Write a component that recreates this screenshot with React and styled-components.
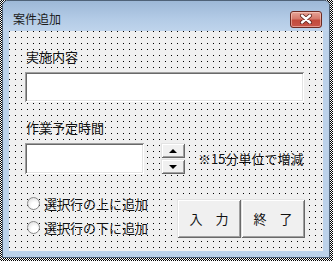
import React from "react";
import styled, { createGlobalStyle } from "styled-components";

const GlobalStyle = createGlobalStyle`
  html, body {
    margin: 0;
    padding: 0;
    width: 333px;
    height: 261px;
    overflow: hidden;
  }
  body {
    font-family: "Noto Sans CJK JP", "Noto Sans", sans-serif;
    color: #111;
  }
`;

const Stage = styled.div`
  width: 333px;
  height: 261px;
  box-sizing: border-box;
  padding: 0 3px 3px 2px;
  background-color: #fff;
  background-image: conic-gradient(#000 25%, #fff 0 50%, #000 0 75%, #fff 0);
  background-size: 2px 2px;
`;

const Window = styled.div`
  width: 328px;
  height: 258px;
  box-sizing: border-box;
  border: 1px solid #4f6278;
  border-radius: 6px 6px 0 0;
  background: #bcd2ea;
  display: flex;
  flex-direction: column;
  overflow: hidden;
`;

const TitleBar = styled.div`
  height: 30px;
  flex: none;
  box-sizing: border-box;
  padding: 6px 7px 0 10px;
  display: flex;
  align-items: center;
  justify-content: space-between;
  background: linear-gradient(#9db8d7, #b3cbe6 60%, #bfd4ec);
`;

const Title = styled.span`
  font-size: 12px;
  line-height: 24px;
  color: #1a1a1a;
`;

const CloseButton = styled.div`
  width: 32px;
  height: 17px;
  box-sizing: border-box;
  border: 1px solid #6c2a22;
  border-radius: 3px;
  background: linear-gradient(#e6a497, #d67a6c 45%, #c24a3b 55%, #c8564a);
  box-shadow: inset 0 0 0 1px rgba(255, 220, 210, 0.5);
  display: flex;
  align-items: center;
  justify-content: center;
`;

const Frame = styled.div`
  flex: 1;
  padding: 0 6px 6px 6px;
  display: flex;
`;

const Client = styled.div`
  flex: 1;
  box-sizing: border-box;
  padding: 18px 18px 0 16px;
  background-color: #f0f0f0;
  background-image: conic-gradient(at 1px 1px, #f0f0f0 270deg, #000 270deg);
  background-size: 6px 6px;
  display: flex;
  flex-direction: column;
  font-size: 13px;
`;

const Label = styled.div`
  height: 16px;
  line-height: 16px;
  margin-left: 1px;
  margin-top: ${(p) => p.$top || 0}px;
  align-self: flex-start;
  white-space: nowrap;
`;

const TextBox = styled.div`
  width: ${(p) => p.$w}px;
  height: ${(p) => p.$h}px;
  margin-top: ${(p) => p.$top || 0}px;
  box-sizing: border-box;
  background: #fff;
  box-shadow: inset 1px 1px #a0a0a0, inset -1px -1px #fff,
    inset 2px 2px #696969, inset -2px -2px #e3e3e3;
  flex: none;
`;

const Row = styled.div`
  display: flex;
  align-items: center;
  margin-top: ${(p) => p.$top || 0}px;
`;

const Spin = styled.div`
  margin-left: 17px;
  width: 24px;
  display: flex;
  flex-direction: column;
  gap: 1px;
`;

const SpinButton = styled.div`
  height: 15px;
  box-sizing: border-box;
  background: #f0f0f0;
  box-shadow: inset 1px 1px #e3e3e3, inset -1px -1px #696969,
    inset 2px 2px #fff, inset -2px -2px #a0a0a0;
  display: flex;
  align-items: center;
  justify-content: center;
`;

const Arrow = styled.span`
  width: 0;
  height: 0;
  border-left: 4px solid transparent;
  border-right: 4px solid transparent;
  ${(p) =>
    p.$down ? "border-top: 4px solid #000;" : "border-bottom: 4px solid #000;"}
`;

const Note = styled.span`
  margin-left: 13px;
  white-space: nowrap;
`;

const BottomRow = styled.div`
  display: flex;
  justify-content: space-between;
  align-items: flex-start;
  margin-top: 21px;
`;

const Options = styled.div`
  display: flex;
  flex-direction: column;
  gap: 8px;
  margin-left: 2px;
`;

const Option = styled.label`
  display: flex;
  align-items: center;
  height: 16px;
  gap: 4px;
  white-space: nowrap;
`;

const RadioCircle = styled.span`
  width: 13px;
  height: 13px;
  box-sizing: border-box;
  border-radius: 50%;
  border: 1px solid #8a8a8a;
  background: radial-gradient(circle at 60% 65%, #fff 30%, #e4e4e4 75%, #cfcfcf);
  flex: none;
`;

const Buttons = styled.div`
  display: flex;
  margin-top: 4px;
`;

const CmdButton = styled.div`
  width: 64px;
  height: 39px;
  box-sizing: border-box;
  background: #f0f0f0;
  box-shadow: inset 1px 1px #e3e3e3, inset -1px -1px #696969,
    inset 2px 2px #fff, inset -2px -2px #a0a0a0;
  display: flex;
  align-items: center;
  justify-content: center;
  font-size: 13px;
  white-space: pre;
`;

const CloseIcon = () => (
  <svg width="14" height="10" viewBox="0 0 14 10">
    <path
      d="M3 1.5 L11 8.5 M11 1.5 L3 8.5"
      stroke="#5a1c15"
      strokeWidth="4"
      strokeLinecap="round"
    />
    <path
      d="M3 1.5 L11 8.5 M11 1.5 L3 8.5"
      stroke="#fff"
      strokeWidth="2.4"
      strokeLinecap="round"
    />
  </svg>
);

const App = () => {
  return (
    <Stage>
      <GlobalStyle />
      <Window>
        <TitleBar>
          <Title>案件追加</Title>
          <CloseButton>
            <CloseIcon />
          </CloseButton>
        </TitleBar>
        <Frame>
          <Client>
            <Label>実施内容</Label>
            <TextBox $w={279} $h={30} $top={7} />
            <Label $top={18}>作業予定時間</Label>
            <Row $top={7}>
              <TextBox $w={119} $h={31} />
              <Spin>
                <SpinButton>
                  <Arrow />
                </SpinButton>
                <SpinButton>
                  <Arrow $down />
                </SpinButton>
              </Spin>
              <Note>※15分単位で増減</Note>
            </Row>
            <BottomRow>
              <Options>
                <Option>
                  <RadioCircle />
                  選択行の上に追加
                </Option>
                <Option>
                  <RadioCircle />
                  選択行の下に追加
                </Option>
              </Options>
              <Buttons>
                <CmdButton>入　力</CmdButton>
                <CmdButton>終　了</CmdButton>
              </Buttons>
            </BottomRow>
          </Client>
        </Frame>
      </Window>
    </Stage>
  );
};

export default App;
